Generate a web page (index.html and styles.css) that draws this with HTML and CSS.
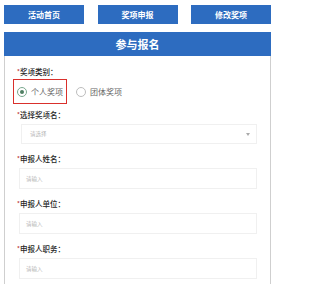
FILE: index.html
```html
<!DOCTYPE html>
<html lang="zh-CN">
<head>
<meta charset="utf-8">
<title>参与报名</title>
<link rel="stylesheet" href="styles.css">
</head>
<body>
<nav class="nav">
  <a class="nav-btn">活动首页</a>
  <a class="nav-btn">奖项申报</a>
  <a class="nav-btn">修改奖项</a>
</nav>
<section class="panel">
  <h1 class="panel-title">参与报名</h1>
  <form class="form">
    <div class="label"><span class="req">*</span>奖项类别：</div>
    <div class="radios">
      <label class="opt opt-hl"><span class="radio radio-on"></span><span class="opt-text">个人奖项</span></label>
      <label class="opt"><span class="radio"></span><span class="opt-text">团体奖项</span></label>
    </div>
    <div class="label"><span class="req">*</span>选择奖项名：</div>
    <div class="field select"><span class="ph">请选择</span><span class="caret"></span></div>
    <div class="label"><span class="req">*</span>申报人姓名：</div>
    <div class="field"><span class="ph">请输入</span></div>
    <div class="label"><span class="req">*</span>申报人单位：</div>
    <div class="field"><span class="ph">请输入</span></div>
    <div class="label"><span class="req">*</span>申报人职务：</div>
    <div class="field"><span class="ph">请输入</span></div>
  </form>
</section>
</body>
</html>
```
FILE: styles.css
```css
* { box-sizing: border-box; }
html, body { margin: 0; padding: 0; background: #fff; }
body {
  font-family: "Noto Sans CJK SC", "Noto Sans", sans-serif;
  color: #333;
  width: 276px;
  height: 284px;
  overflow: hidden;
}
.nav {
  display: flex;
  justify-content: space-between;
  padding: 5px 5px 0 4px;
  height: 32px;
}
.nav-btn {
  width: 80px;
  height: 19px;
  background: #2d6cc0;
  color: #fff;
  font-size: 8px;
  font-weight: bold;
  line-height: 19px;
  text-align: center;
}
.panel {
  margin: 0 5px 0 4px;
}
.panel-title {
  margin: 0;
  height: 24px;
  line-height: 24px;
  background: #2d6cc0;
  color: #fff;
  font-size: 11px;
  font-weight: bold;
  text-align: center;
}
.form {
  border-left: 1px solid #cfcfcf;
  border-right: 1px solid #cfcfcf;
  padding: 10px 13px 20px 12px;
  height: 240px;
}
.label {
  height: 12px;
  line-height: 12px;
  font-size: 7.5px;
  color: #262626;
  font-weight: 500;
}
.req { color: #b33; font-size: 6px; vertical-align: top; }
.radios {
  display: flex;
  align-items: center;
  margin: 1px 0 5px -4px;
  height: 25px;
}
.opt {
  display: flex;
  align-items: center;
  gap: 4px;
  height: 25px;
  padding: 0 3px 0 3px;
  border: 1.5px solid transparent;
  font-size: 8px;
  color: #666;
}
.opt + .opt { margin-left: 5px; }
.opt-hl { border-color: #d9302c; }
.radio {
  width: 10px;
  height: 10px;
  border: 1px solid #bdbdbd;
  border-radius: 50%;
  display: flex;
  align-items: center;
  justify-content: center;
}
.radio-on { border-color: #7aa88e; }
.radio-on::after {
  content: "";
  width: 4px;
  height: 4px;
  border-radius: 50%;
  background: #4f7f63;
}
.field {
  position: relative;
  margin: 3px 0 9px 2px;
  height: 21px;
  border: 1px solid #f0f0f0;
  display: flex;
  align-items: center;
  padding-left: 6px;
}
.select { height: 20px; margin-bottom: 9px; padding-left: 8px; margin-left: 4px; }
.ph { font-size: 5.5px; color: #b8b8b8; }
.caret {
  position: absolute;
  right: 6px;
  top: 8px;
  width: 0;
  height: 0;
  border-left: 2.5px solid transparent;
  border-right: 2.5px solid transparent;
  border-top: 3px solid #aaa;
}
```
